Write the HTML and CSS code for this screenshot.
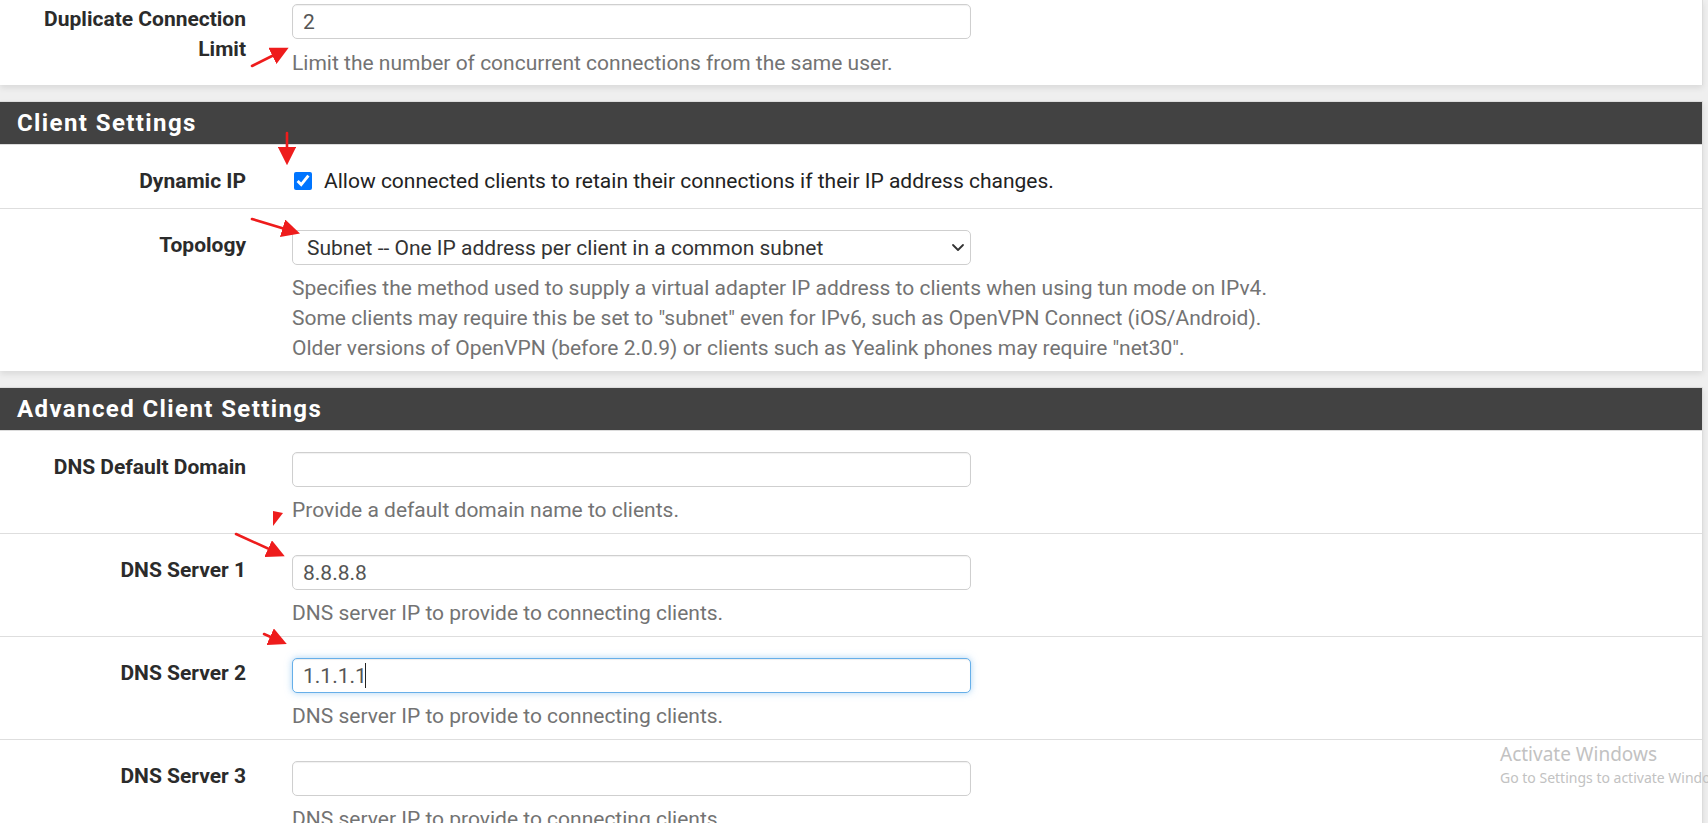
FILE: index.html
```html
<!DOCTYPE html>
<html lang="en">
<head>
<meta charset="utf-8">
<title>OpenVPN Server</title>
<link rel="stylesheet" href="styles.css">
</head>
<body>
<div class="page">
  <section class="panel panel-cut">
    <div class="row row-first">
      <div class="label">Duplicate Connection Limit</div>
      <div class="field">
        <input class="text" type="text" value="2">
        <div class="help">Limit the number of concurrent connections from the same user.</div>
      </div>
    </div>
  </section>

  <section class="panel">
    <h2 class="panel-title">Client Settings</h2>
    <div class="row row-check">
      <div class="label">Dynamic IP</div>
      <div class="field">
        <label class="check"><input type="checkbox" checked><span>Allow connected clients to retain their connections if their IP address changes.</span></label>
      </div>
    </div>
    <div class="row">
      <div class="label">Topology</div>
      <div class="field">
        <div class="select-wrap">
          <select class="select">
            <option selected>Subnet -- One IP address per client in a common subnet</option>
            <option>net30 -- Isolated /30 network per client</option>
          </select>
          <svg class="chevron" width="14" height="9" viewBox="0 0 14 9"><path d="M2 2 L7 7 L12 2" fill="none" stroke="#333" stroke-width="1.8" stroke-linecap="round" stroke-linejoin="round"/></svg>
        </div>
        <div class="help">Specifies the method used to supply a virtual adapter IP address to clients when using tun mode on IPv4.<br>Some clients may require this be set to "subnet" even for IPv6, such as OpenVPN Connect (iOS/Android).<br>Older versions of OpenVPN (before 2.0.9) or clients such as Yealink phones may require "net30".</div>
      </div>
    </div>
  </section>

  <section class="panel">
    <h2 class="panel-title">Advanced Client Settings</h2>
    <div class="row">
      <div class="label">DNS Default Domain</div>
      <div class="field">
        <input class="text" type="text" value="">
        <div class="help">Provide a default domain name to clients.</div>
      </div>
    </div>
    <div class="row">
      <div class="label">DNS Server 1</div>
      <div class="field">
        <input class="text" type="text" value="8.8.8.8">
        <div class="help">DNS server IP to provide to connecting clients.</div>
      </div>
    </div>
    <div class="row">
      <div class="label">DNS Server 2</div>
      <div class="field">
        <div class="input-wrap">
          <input class="text text-focus" type="text" value="1.1.1.1">
          <span class="caret"></span>
        </div>
        <div class="help">DNS server IP to provide to connecting clients.</div>
      </div>
    </div>
    <div class="row">
      <div class="label">DNS Server 3</div>
      <div class="field">
        <input class="text" type="text" value="">
        <div class="help">DNS server IP to provide to connecting clients.</div>
      </div>
    </div>
  </section>
</div>

<svg class="annotations" width="1708" height="823" viewBox="0 0 1708 823">
  <defs>
    <marker id="ah" markerWidth="7" markerHeight="7" refX="5" refY="3.5" orient="auto" markerUnits="strokeWidth">
      <path d="M0 0 L7 3.5 L0 7 Z" fill="#ee1c1c"/>
    </marker>
  </defs>
  <g stroke="#ee1c1c" stroke-width="2.6" stroke-linecap="round" fill="none">
    <line x1="252" y1="66" x2="284" y2="50" marker-end="url(#ah)"/>
    <line x1="287" y1="133" x2="287" y2="160" marker-end="url(#ah)"/>
    <line x1="252" y1="219" x2="295" y2="232" marker-end="url(#ah)"/>
    <line x1="236" y1="534" x2="280" y2="554" marker-end="url(#ah)"/>
    <line x1="264" y1="634" x2="282" y2="642" marker-end="url(#ah)"/>
  </g>
  <polygon points="273,511 283,513 273,526" fill="#ee1c1c"/>
</svg>

<div class="watermark">
  <div class="wm-title">Activate Windows</div>
  <div class="wm-sub">Go to Settings to activate Windows.</div>
</div>
</body>
</html>
```

FILE: styles.css
```css
* {
  box-sizing: border-box;
}

html,
body {
  margin: 0;
  padding: 0;
}

body {
  width: 1708px;
  height: 823px;
  overflow: hidden;
  position: relative;
  background: #efefef;
  font-family: Roboto, "Liberation Sans", Arial, sans-serif;
  color: #333;
}

.page {
  width: 1703px;
}

.panel {
  background: #fff;
  margin-bottom: 16px;
  border-top: 1px solid #dcdcdc;
  border-right: 1px solid #dcdcdc;
  box-shadow: 0 3px 6px rgba(0, 0, 0, 0.09);
}

.panel-cut {
  border-top: 0;
}

.panel-title {
  margin: 0;
  height: 43px;
  padding-left: 17px;
  background: #424242;
  color: #fff;
  font-size: 24px;
  font-weight: 700;
  letter-spacing: 1.4px;
  line-height: 42px;
  border-bottom: 1px solid #dcdcdc;
}

.row {
  display: grid;
  grid-template-columns: 246px 1fr;
  column-gap: 46px;
  padding: 21px 0 8px;
  border-top: 1px solid #dedede;
}

.panel-title + .row,
.row-first {
  border-top: 0;
}

.row-first {
  padding-top: 4px;
}

.row-first .help {
  margin-top: 9px;
}

.row-first {
  padding-bottom: 7px;
}

.row-check {
  padding: 21px 0 12px;
}

.label {
  font-size: 21px;
  line-height: 30px;
  font-weight: 700;
  text-align: right;
  color: #2b2b2b;
}

.field {
  min-width: 0;
}

.text {
  display: block;
  width: 679px;
  height: 35px;
  padding: 0 10px;
  font-family: Roboto, "Liberation Sans", Arial, sans-serif;
  font-size: 21px;
  color: #555;
  background: #fff;
  border: 1px solid #cfcfcf;
  border-radius: 5px;
  box-shadow: inset 0 1px 1px rgba(0, 0, 0, 0.06);
  outline: none;
}

.text-focus {
  border-color: #66afe9;
  box-shadow: inset 0 1px 1px rgba(0, 0, 0, 0.075), 0 0 7px rgba(102, 175, 233, 0.55);
}

.input-wrap {
  position: relative;
  width: 679px;
}

.caret {
  position: absolute;
  left: 73px;
  top: 5px;
  width: 1px;
  height: 25px;
  background: #222;
}

.help {
  margin-top: 8px;
  font-size: 21px;
  line-height: 30px;
  color: #737373;
  white-space: nowrap;
}

.check {
  display: flex;
  align-items: center;
  height: 30px;
  font-size: 21px;
  line-height: 30px;
  color: #222;
}

.check input {
  width: 18px;
  height: 18px;
  margin: 0 12px 0 2px;
  accent-color: #0075ff;
}

.select-wrap {
  position: relative;
  width: 679px;
}

.select {
  display: block;
  width: 679px;
  height: 35px;
  padding: 0 40px 0 14px;
  font-family: Roboto, "Liberation Sans", Arial, sans-serif;
  font-size: 21px;
  color: #333;
  background: #fff;
  border: 1px solid #cfcfcf;
  border-radius: 5px;
  appearance: none;
  -webkit-appearance: none;
  outline: none;
}

.chevron {
  position: absolute;
  right: 6px;
  top: 13px;
  pointer-events: none;
}

.annotations {
  position: absolute;
  left: 0;
  top: 0;
  pointer-events: none;
}

.watermark {
  position: absolute;
  left: 1500px;
  top: 741px;
  color: #c2c2c2;
  font-family: "Noto Sans", "Open Sans", sans-serif;
  white-space: nowrap;
  pointer-events: none;
}

.wm-title {
  font-size: 19px;
  line-height: 26px;
}

.wm-sub {
  font-size: 14px;
  line-height: 22px;
}
```
